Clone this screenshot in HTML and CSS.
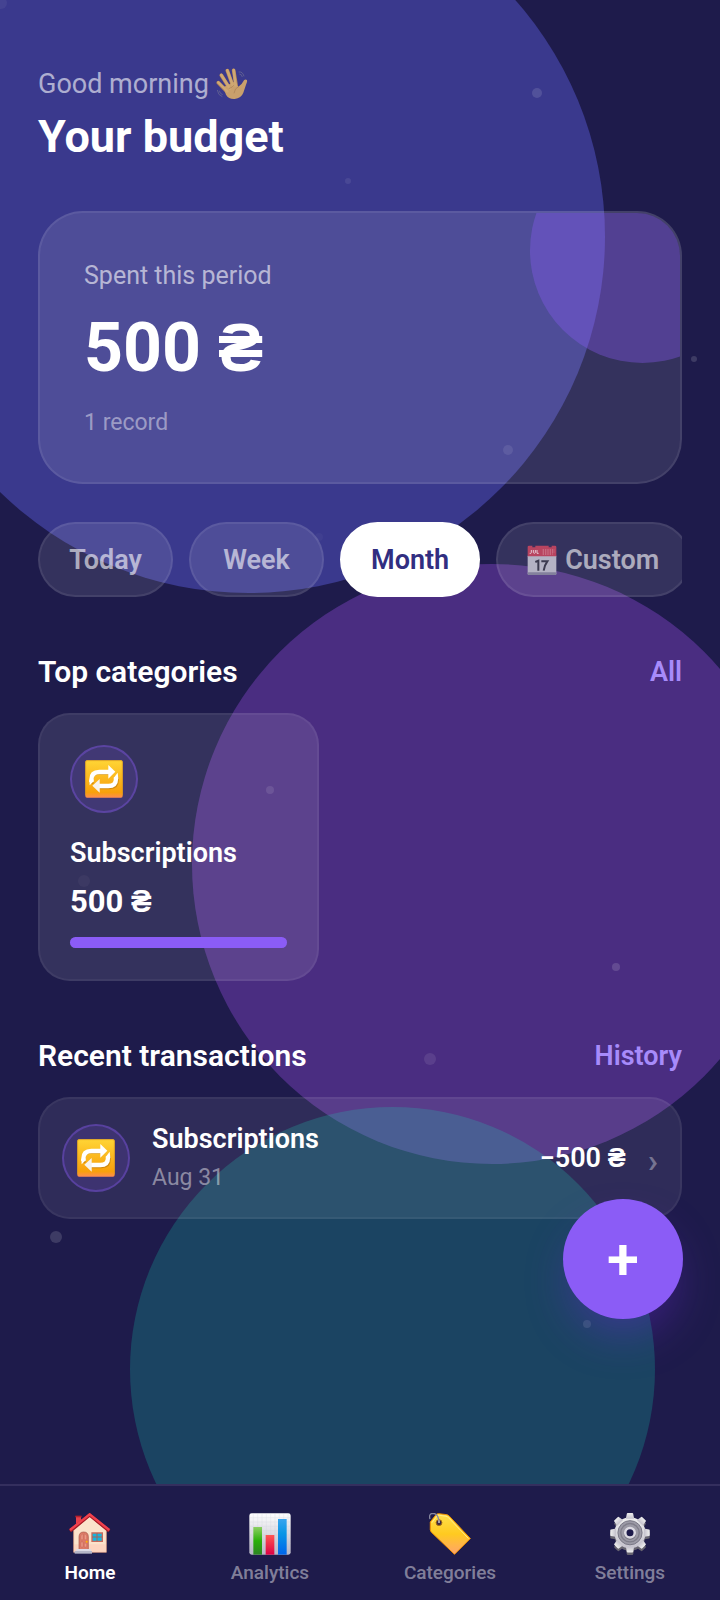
FILE: index.html
```html
<!DOCTYPE html>
<html lang="en">
<head>
    <meta charset="UTF-8">
    <meta name="viewport" content="width=device-width, initial-scale=1.0">
    <title>Your budget</title>
    <link rel="stylesheet" href="styles.css">
</head>
<body>

    <!-- Shared icons -->
    <svg class="icon-defs" width="0" height="0" aria-hidden="true">
        <defs>
            <linearGradient id="orange" x1="0" y1="0" x2="0" y2="1">
                <stop offset="0" stop-color="#ffd535"/>
                <stop offset="0.86" stop-color="#f8a00c"/>
                <stop offset="1" stop-color="#ff8c50"/>
            </linearGradient>
            <symbol id="icon-repeat" viewBox="0 0 114 114">
                <rect x="1" y="1" width="112" height="112" rx="5" fill="url(#orange)"/>
                <path d="M2 106V6q0-4 4-4h102q4 0 4 4v100" fill="none" stroke="#e9a21c" stroke-width="2"/>
                <path d="M20 72V60Q20 39 42 39H74M96 52V60Q96 82 74 82H44" fill="none" stroke="#a8690c" stroke-width="11" opacity="0.5"/>
                <path d="M19 66V60Q19 36 43 36H72M93 52V56Q93 78 70 78H42" fill="none" stroke="#fff" stroke-width="13"/>
                <path d="M13 60L14 76 26 64V58ZM86 54L98 38 100 56 88 60Z" fill="#fff"/>
                <path d="M70 15L91 35 70 56Z" fill="#fff"/>
                <path d="M44 57L22 77 44 98Z" fill="#f6f2ee"/>
            </symbol>
        </defs>
    </svg>

    <div class="app">

        <!-- Background blobs and particles -->
        <div class="backdrop" aria-hidden="true">
            <span class="blob blob-indigo"></span>
            <span class="blob blob-purple"></span>
            <span class="blob blob-teal"></span>
            <svg class="particles" width="720" height="1484" fill="#fff">
                <circle cx="1" cy="3" r="6" opacity="0.05"/>
                <circle cx="537" cy="93" r="5" opacity="0.12"/>
                <circle cx="348" cy="181" r="3" opacity="0.08"/>
                <circle cx="694" cy="359" r="3" opacity="0.14"/>
                <circle cx="508" cy="450" r="5" opacity="0.09"/>
                <circle cx="319" cy="537" r="4" opacity="0.03"/>
                <circle cx="270" cy="790" r="4" opacity="0.1"/>
                <circle cx="84" cy="881" r="6" opacity="0.04"/>
                <circle cx="616" cy="967" r="4" opacity="0.14"/>
                <circle cx="430" cy="1059" r="6" opacity="0.09"/>
                <circle cx="56" cy="1237" r="6" opacity="0.14"/>
                <circle cx="587" cy="1324" r="4" opacity="0.11"/>
            </svg>
        </div>

        <main class="content">
            <header class="header">
                <p class="greeting">Good morning
                    <svg class="wave" viewBox="0 0 96 96" aria-hidden="true">
                        <g fill="none" stroke-linecap="round" stroke="#b08358" stroke-width="11">
                            <path d="M7 44L34 72M16 22L40 60M34 8L50 52M53 7L60 50"/>
                        </g>
                        <path d="M22 58L58 40 67 56Q78 50 84 37 88 32 93 36 95 40 90 50 86 62 82 74 76 90 56 93 38 94 30 80Z" fill="#c9a06c"/>
                        <g fill="none" stroke-linecap="round" stroke="#cfa873" stroke-width="8">
                            <path d="M7 43L34 70M16 21L42 62M34 7L51 54M53 6L59 52"/>
                        </g>
                        <path d="M54 76Q56 60 68 56M38 62Q46 60 54 52" fill="none" stroke="#a97d55" stroke-width="2"/>
                        <path d="M68 12Q80 10 84 25M70 18Q77 18 79 27M4 66Q6 82 19 86M10 68Q11 77 20 80" fill="none" stroke="#6f7094" stroke-width="2"/>
                    </svg>
                </p>
                <h1 class="title">Your budget</h1>
            </header>

            <section class="summary">
                <span class="summary-glow"></span>
                <p class="summary-label">Spent this period</p>
                <p class="summary-amount">500 ₴</p>
                <p class="summary-count">1 record</p>
            </section>

            <div class="periods">
                <button type="button" class="chip">Today</button>
                <button type="button" class="chip">Week</button>
                <button type="button" class="chip active">Month</button>
                <button type="button" class="chip">
                    <svg class="calendar" viewBox="0 0 88 90" aria-hidden="true">
                        <rect x="1" y="30" width="86" height="60" rx="4" fill="#b4b2c4"/>
                        <rect x="1" y="82" width="86" height="8" rx="3" fill="#83809c"/>
                        <path d="M1 34V6q0-4 4-4h78q4 0 4 4v28z" fill="#b84460"/>
                        <path d="M15 0h9v7h-9zM64 0h9v7h-9z" fill="#40305a"/>
                        <path d="M12 15v8q0 3-5 2M18 15v8q3 4 6 0v-8M29 15v10h5" fill="none" stroke="#e4c8d4" stroke-width="3"/>
                        <path d="M46 15h36M46 21h36M46 27h30" stroke="#d58e9f" stroke-width="3" stroke-dasharray="4 3"/>
                        <path d="M24 51l9-4v30M42 49h18q-9 12-11 28" fill="none" stroke="#3d3b50" stroke-width="6"/>
                    </svg>
                    Custom
                </button>
            </div>

            <section>
                <div class="section-head">
                    <h2>Top categories</h2>
                    <a href="#">All</a>
                </div>
                <article class="category">
                    <span class="badge"><svg><use href="#icon-repeat"/></svg></span>
                    <h3 class="category-name">Subscriptions</h3>
                    <p class="category-amount">500 ₴</p>
                    <div class="bar"><div class="bar-fill" style="width: 100%"></div></div>
                </article>
            </section>

            <section>
                <div class="section-head">
                    <h2>Recent transactions</h2>
                    <a href="#">History</a>
                </div>
                <a class="transaction" href="#">
                    <span class="badge"><svg><use href="#icon-repeat"/></svg></span>
                    <span class="transaction-info">
                        <span class="transaction-name">Subscriptions</span>
                        <span class="transaction-date">Aug 31</span>
                    </span>
                    <span class="transaction-amount">−500 ₴</span>
                    <span class="chevron">›</span>
                </a>
            </section>
        </main>

        <button type="button" class="add" aria-label="Add">+</button>

        <nav class="tabs">
            <a class="tab active" href="#">
                <svg viewBox="0 0 126 126" aria-hidden="true">
                    <path d="M21 10h15v28H21z" fill="#e8404c"/>
                    <path d="M19 8h19v5H19z" fill="#b51f2c"/>
                    <path d="M14 52L62 10l50 42v66H14z" fill="#fbe3cb" stroke="#e8a184" stroke-width="2"/>
                    <path d="M16 94h94v23H16z" fill="#ffc8b6" opacity="0.5"/>
                    <path d="M3 54L62 6l59 48" fill="none" stroke="#a91824" stroke-width="10"/>
                    <path d="M3 51L62 4l59 47" fill="none" stroke="#f0424e" stroke-width="7"/>
                    <path d="M30 110V72q0-15 14-15t14 15v38z" fill="#dd7a67" stroke="#a65448" stroke-width="2"/>
                    <path d="M36 80V70q0-7 6-7v17zM46 80V63q7 0 7 7v10zM36 87h6v15h-6zM46 91h7v11h-7z" fill="#ee9784" stroke="#b95d50"/>
                    <circle cx="53" cy="86" r="3" fill="#ffb300"/>
                    <path d="M69 60h31v25H69z" fill="#14b6df" stroke="#c86b5c" stroke-width="4"/>
                    <path d="M84 60v25M69 72h31" stroke="#a4645c" stroke-width="3"/>
                    <path d="M22 108h44v6H22z" fill="#dcdce8"/>
                    <path d="M17 114h52v8H17z" fill="#b5b6c8"/>
                </svg>
                Home
            </a>
            <a class="tab" href="#">
                <svg viewBox="0 0 126 126" aria-hidden="true">
                    <defs>
                        <linearGradient id="paper" x1="0" y1="0" x2="0" y2="1">
                            <stop offset="0" stop-color="#fff"/>
                            <stop offset="1" stop-color="#b6b4c4"/>
                        </linearGradient>
                        <linearGradient id="green" x1="0" y1="0" x2="0" y2="1">
                            <stop offset="0" stop-color="#8ccf62"/>
                            <stop offset="0.5" stop-color="#2bb00a"/>
                            <stop offset="1" stop-color="#2d8423"/>
                        </linearGradient>
                        <linearGradient id="red" x1="0" y1="0" x2="0" y2="1">
                            <stop offset="0" stop-color="#ff5552"/>
                            <stop offset="1" stop-color="#dc0045"/>
                        </linearGradient>
                        <linearGradient id="blue" x1="0" y1="0" x2="0" y2="1">
                            <stop offset="0" stop-color="#39a5ef"/>
                            <stop offset="0.4" stop-color="#0996e6"/>
                            <stop offset="1" stop-color="#0064ec"/>
                        </linearGradient>
                    </defs>
                    <rect x="1" y="1" width="124" height="124" rx="7" fill="url(#paper)"/>
                    <path d="M13 2v122M26 2v122M39 2v122M52 2v122M65 2v122M78 2v122M91 2v122M104 2v122M117 2v122M2 14h122M2 27h122M2 40h122M2 53h122M2 66h122M2 79h122M2 92h122M2 105h122M2 118h122" stroke="#c4cad6" opacity="0.6"/>
                    <path d="M13 42h26v83H13z" fill="url(#green)"/>
                    <path d="M50 66h26v59H50z" fill="url(#red)"/>
                    <path d="M87 18h26v107H87z" fill="url(#blue)"/>
                </svg>
                Analytics
            </a>
            <a class="tab" href="#">
                <svg viewBox="0 0 130 130" aria-hidden="true">
                    <defs>
                        <linearGradient id="tag" x1="0" y1="0" x2="0" y2="1">
                            <stop offset="0" stop-color="#ffe04d"/>
                            <stop offset="0.5" stop-color="#ffca20"/>
                            <stop offset="1" stop-color="#ffa36c"/>
                        </linearGradient>
                    </defs>
                    <path d="M4 28L22 5q3-3 8-3l24 3q5 1 9 5l65 69-49 49L8 60q-3-3-4-8z" fill="url(#tag)" stroke="#f29100" stroke-width="3"/>
                    <path d="M9 30L25 9q3-3 7-2l20 3q5 1 8 4l62 65" fill="none" stroke="#fff3a0" stroke-width="3" opacity="0.8"/>
                    <circle cx="31" cy="30" r="9" fill="#3c2b43" stroke="#a96f12" stroke-width="3"/>
                    <path d="M3 19Q-2 1 14 1 28 3 31 25" fill="none" stroke="#8889a0" stroke-width="4"/>
                    <path d="M31 23v8" stroke="#e4e2df" stroke-width="4"/>
                </svg>
                Categories
            </a>
            <a class="tab" href="#">
                <svg viewBox="0 0 126 132" aria-hidden="true">
                    <defs>
                        <linearGradient id="steel" x1="0" y1="0" x2="0" y2="1">
                            <stop offset="0" stop-color="#efefef"/>
                            <stop offset="1" stop-color="#c4c1cc"/>
                        </linearGradient>
                        <g id="gear">
                            <circle cx="63" cy="62" r="49"/>
                            <g id="teeth">
                                <path id="tooth" d="M50 18L53 2q0-2 3-2h14q3 0 3 2l3 16z"/>
                                <use href="#tooth" transform="rotate(45 63 62)"/>
                                <use href="#tooth" transform="rotate(90 63 62)"/>
                                <use href="#tooth" transform="rotate(135 63 62)"/>
                            </g>
                            <use href="#teeth" transform="rotate(180 63 62)"/>
                        </g>
                    </defs>
                    <use href="#gear" y="8" fill="#666370"/>
                    <use href="#gear" fill="url(#steel)"/>
                    <circle cx="63" cy="62" r="38" fill="#9c9aa6" stroke="#777583" stroke-width="3"/>
                    <circle cx="63" cy="62" r="29" fill="none" stroke="#7f7d8a" stroke-width="4"/>
                    <circle cx="63" cy="65" r="19" fill="#706e7b"/>
                    <circle cx="63" cy="62" r="15" fill="#1e1b4b" stroke="#dcdae2" stroke-width="8"/>
                </svg>
                Settings
            </a>
        </nav>
    </div>

</body>
</html>
```
FILE: styles.css
```css
* {
    box-sizing: border-box;
}

body {
    margin: 0;
    background-color: #1e1b4b;
    color: #fff;
    font-family: Roboto, "Liberation Sans", sans-serif;
}

h1, h2, h3, p {
    margin: 0;
}

a {
    color: inherit;
    text-decoration: none;
}

button {
    font-family: inherit;
    cursor: pointer;
}

.icon-defs {
    position: absolute;
}

.app {
    position: relative;
    display: flex;
    flex-direction: column;
    min-height: 100vh;
    overflow: hidden;
}

/* Background */
.backdrop {
    position: absolute;
    inset: 0;
    overflow: hidden;
}

.blob {
    position: absolute;
    border-radius: 50%;
}

.blob-indigo {
    top: -120px;
    left: -108px;
    width: 713px;
    height: 713px;
    background-color: rgba(99, 102, 241, 0.4);
}

.blob-purple {
    top: 564px;
    right: -72px;
    width: 600px;
    height: 600px;
    background-color: rgba(168, 85, 247, 0.32);
}

.blob-teal {
    bottom: -32px;
    left: 130px;
    width: 525px;
    height: 525px;
    background-color: rgba(20, 184, 166, 0.26);
}

.particles {
    position: absolute;
    top: 0;
    left: 0;
}

.content {
    position: relative;
    flex: 1;
    padding: 67px 38px 40px;
}

/* Header */
.greeting {
    display: flex;
    align-items: center;
    gap: 7px;
    font-size: 27px;
    line-height: 34px;
    color: rgba(255, 255, 255, 0.6);
}

.wave {
    width: 32px;
    height: 32px;
}

.title {
    margin-top: 9px;
    font-size: 45px;
    line-height: 54px;
    font-weight: 700;
}

/* Summary card */
.summary {
    position: relative;
    margin-top: 47px;
    padding: 48px 44px 45px;
    border: 2px solid rgba(255, 255, 255, 0.08);
    border-radius: 45px;
    background-color: rgba(255, 255, 255, 0.1);
    overflow: hidden;
}

.summary-glow {
    position: absolute;
    top: -75px;
    right: -75px;
    width: 225px;
    height: 225px;
    border-radius: 50%;
    background-color: rgba(139, 92, 246, 0.35);
}

.summary-label {
    font-size: 25px;
    line-height: 30px;
    color: rgba(255, 255, 255, 0.6);
}

.summary-amount {
    margin: 17px 0 21px;
    font-size: 68px;
    line-height: 80px;
    font-weight: 700;
}

.summary-count {
    font-size: 23px;
    line-height: 28px;
    color: rgba(255, 255, 255, 0.45);
}

/* Period chips */
.periods {
    display: flex;
    gap: 16px;
    margin-top: 38px;
    overflow: hidden;
}

.chip {
    display: flex;
    flex-shrink: 0;
    align-items: center;
    justify-content: center;
    gap: 8px;
    min-width: 135px;
    height: 75px;
    padding: 0 29px;
    border: 2px solid rgba(255, 255, 255, 0.08);
    border-radius: 38px;
    background-color: rgba(255, 255, 255, 0.1);
    color: rgba(255, 255, 255, 0.6);
    font-size: 27px;
    font-weight: 600;
}

.chip.active {
    border-color: #fff;
    background-color: #fff;
    color: #312e81;
}

.calendar {
    width: 30px;
    height: 30px;
}

/* Sections */
.section-head {
    display: flex;
    justify-content: space-between;
    align-items: center;
    margin: 57px 0 23px;
    line-height: 36px;
}

.section-head h2 {
    font-size: 30px;
    font-weight: 600;
}

.section-head a {
    color: #a78bfa;
    font-size: 27px;
    font-weight: 600;
}

.badge {
    display: flex;
    justify-content: center;
    align-items: center;
    width: 68px;
    height: 68px;
    border: 2px solid rgba(139, 92, 246, 0.35);
    border-radius: 50%;
    background-color: rgba(139, 92, 246, 0.15);
}

.badge svg {
    width: 38px;
    height: 38px;
}

/* Category card */
.category {
    width: 281px;
    padding: 30px 30px 31px;
    border: 2px solid rgba(255, 255, 255, 0.05);
    border-radius: 32px;
    background-color: rgba(255, 255, 255, 0.1);
}

.category-name {
    margin-top: 24px;
    font-size: 27px;
    line-height: 32px;
    font-weight: 600;
}

.category-amount {
    margin: 14px 0 16px;
    font-size: 31px;
    line-height: 38px;
    font-weight: 700;
}

.bar {
    height: 11px;
    border-radius: 6px;
    background-color: rgba(255, 255, 255, 0.1);
}

.bar-fill {
    height: 100%;
    border-radius: 6px;
    background-color: #8b5cf6;
}

/* Transaction row */
.transaction {
    display: flex;
    align-items: center;
    padding: 24px 22px;
    border: 2px solid rgba(255, 255, 255, 0.05);
    border-radius: 32px;
    background-color: rgba(255, 255, 255, 0.08);
}

.transaction-info {
    display: flex;
    flex: 1;
    flex-direction: column;
    gap: 8px;
    margin-left: 22px;
}

.transaction-name {
    font-size: 27px;
    line-height: 32px;
    font-weight: 600;
}

.transaction-date {
    font-size: 23px;
    line-height: 30px;
    color: rgba(255, 255, 255, 0.45);
}

.transaction-amount {
    font-size: 27px;
    line-height: 32px;
    font-weight: 600;
}

.chevron {
    margin-left: 22px;
    padding-top: 4px;
    font-size: 34px;
    line-height: 34px;
    font-weight: 600;
    color: rgba(255, 255, 255, 0.35);
}

/* Add button */
.add {
    position: absolute;
    right: 37px;
    bottom: 281px;
    width: 120px;
    height: 120px;
    padding: 0;
    border: none;
    border-radius: 50%;
    background-color: #8b5cf6;
    box-shadow: 0 22px 45px -8px rgba(109, 40, 217, 0.4);
    color: #fff;
    font-size: 58px;
    font-weight: 600;
    line-height: 120px;
}

/* Bottom tabs */
.tabs {
    position: relative;
    display: grid;
    grid-template-columns: repeat(4, 1fr);
    padding: 27px 0 15px;
    border-top: 2px solid #342f5e;
    background-color: #1e1b4b;
}

.tab {
    display: flex;
    flex-direction: column;
    align-items: center;
    gap: 6px;
    font-size: 19px;
    line-height: 24px;
    font-weight: 500;
    color: rgba(255, 255, 255, 0.45);
}

.tab.active {
    color: #fff;
    font-weight: 600;
}

.tab svg {
    width: 42px;
    height: 42px;
}
```
